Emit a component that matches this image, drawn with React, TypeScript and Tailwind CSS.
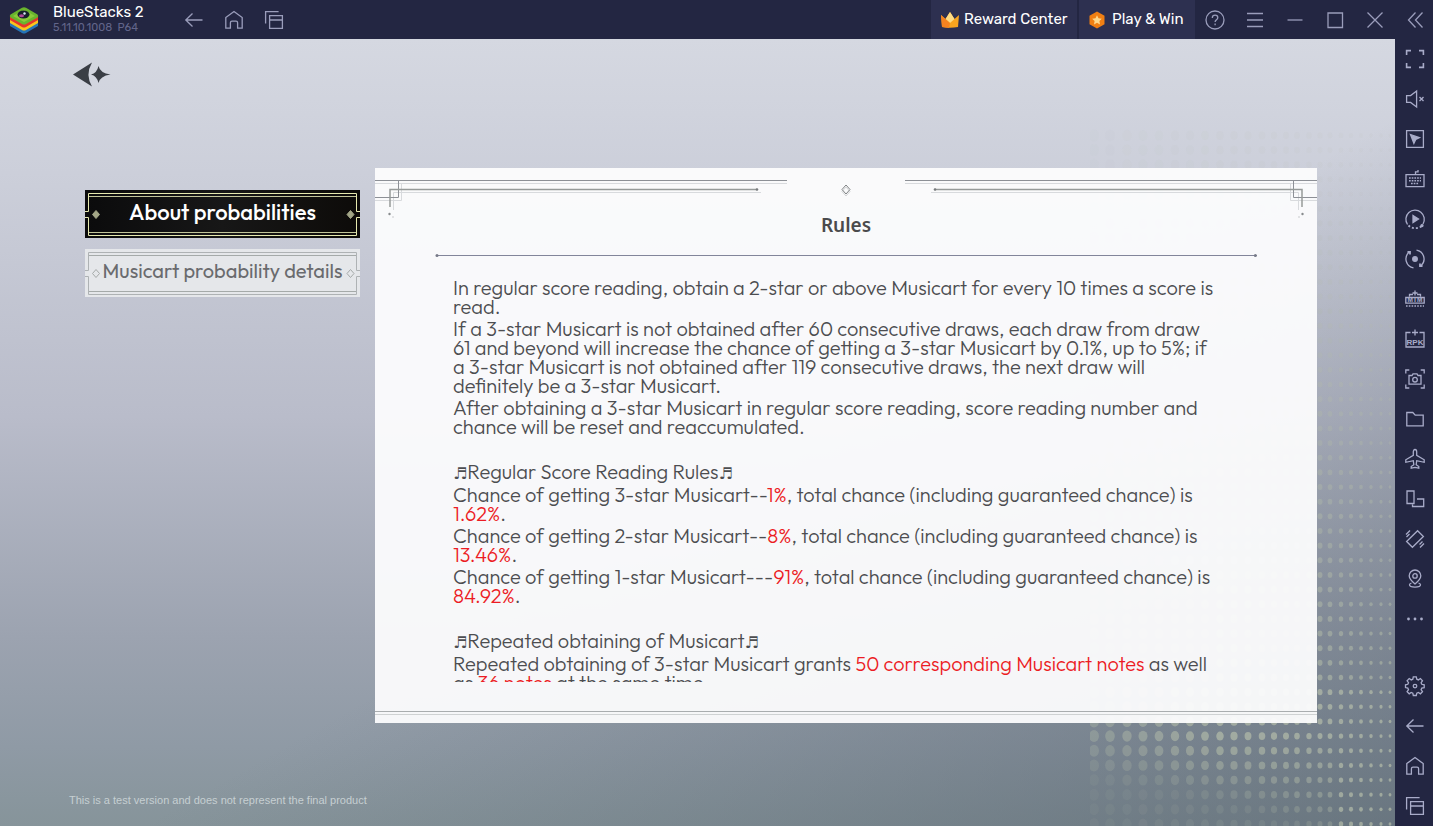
import React from "react";

const bodyFont = "font-['Outfit',Lato,sans-serif]";

const Svg = ({ children, size = 22 }: { children: React.ReactNode; size?: number }) => (
  <svg
    width={size}
    height={size}
    viewBox="0 0 22 22"
    fill="none"
    stroke="currentColor"
    strokeWidth="1.3"
    aria-hidden="true"
  >
    {children}
  </svg>
);

const icons = {
  back: (
    <Svg>
      <path d="M19.5 11H3M9.5 4.5 2.8 11l6.7 6.5" />
    </Svg>
  ),
  home: (
    <Svg>
      <path d="M2.8 8.6 11 2.6l8.2 6v10.6h-4.6v-5.4a1.6 1.6 0 0 0-1.6-1.6H9a1.6 1.6 0 0 0-1.6 1.6v5.4H2.8z" />
    </Svg>
  ),
  recent: (
    <Svg>
      <path d="M2.6 14.5V2.6h13M6.6 6.6h12.8v12.8H6.6zM6.6 11h12.8" />
    </Svg>
  ),
  help: (
    <Svg>
      <circle cx="11" cy="11" r="9" />
      <path d="M8.3 8.9c0-1.7 1.2-2.7 2.8-2.7 1.5 0 2.7 1 2.7 2.5 0 2-2.7 2.2-2.7 4.3M11.1 14.6v1.6" />
    </Svg>
  ),
  menu: (
    <Svg>
      <path d="M3 4.5h16M3 11h16M3 17.5h16" />
    </Svg>
  ),
  minimize: (
    <Svg>
      <path d="M3.5 11h15" />
    </Svg>
  ),
  maximize: (
    <Svg>
      <path d="M4 4h14.5v14.5H4z" />
    </Svg>
  ),
  close: (
    <Svg>
      <path d="m3.5 3.5 15 15M18.5 3.5l-15 15" />
    </Svg>
  ),
  collapse: (
    <Svg>
      <path d="M11.5 3.5 4.5 11l7 7.5M18.5 3.5l-7 7.5 7 7.5" />
    </Svg>
  ),
  fullscreen: (
    <Svg>
      <path d="M2.6 7V2.6H7M15 2.6h4.4V7M19.4 15v4.4H15M7 19.4H2.6V15" strokeWidth="1.6" />
    </Svg>
  ),
  mute: (
    <Svg>
      <path d="M2.6 7.6h4l6-4.6v16l-6-4.6h-4zM15.5 9l4 4M19.5 9l-4 4" />
    </Svg>
  ),
  pointer: (
    <Svg>
      <path d="M2.6 2.6h16.8v16.8H2.6z" />
      <path d="m6.5 6.5 9 3.2-3.8 1.8-1.8 3.8z" fill="currentColor" />
    </Svg>
  ),
  keyboard: (
    <Svg>
      <path d="M2 6.6h18v12H2zM11.5 6.5V3.8H14V2" />
      <path d="M5 10h12M5 12.7h12M7 15.5h8" strokeDasharray="1.7 1" strokeWidth="1.5" />
    </Svg>
  ),
  macro: (
    <Svg>
      <path d="M3.5 16.5a9.2 9.2 0 1 1 15.5-.5" />
      <path d="M4.5 17.5c3.5 3.5 10 3.7 13.5.2" strokeDasharray="2 2" strokeWidth="1.8" />
      <path d="m9 7.5 5.5 3.5L9 14.5z" fill="currentColor" />
      <circle cx="18" cy="17.6" r="1" fill="currentColor" />
    </Svg>
  ),
  sync: (
    <Svg>
      <path d="M9.5 19.9A9 9 0 0 1 5 4.3M12.500 2.100A9 9 0 0 1 17 17.7" />
      <path d="M3.500 4h2.500v2.500M18.500 18H16v-2.500" strokeWidth="1.8" />
      <circle cx="11" cy="11" r="2.3" fill="currentColor" />
    </Svg>
  ),
  memory: (
    <Svg>
      <path d="M5.5 8.5v-2H9M13 6.500h3.5v2M11 2.500v5M8.500 5h5M1.800 9.500h18.400v5.700H1.800z" />
      <text x="11" y="14.3" textAnchor="middle" fontSize="6.5" fontWeight="700" fontFamily="Liberation Sans, sans-serif" fill="currentColor" stroke="none">
        MTM
      </text>
      <path d="M2 18h18" strokeDasharray="1.6 1.2" />
    </Svg>
  ),
  apk: (
    <Svg>
      <path d="M6.5 4.5H2V19h18V4.500h-4.500M11 1.500v6M8 4.500h6" />
      <text x="11" y="16.500" textAnchor="middle" fontSize="8" fontWeight="700" fontFamily="Liberation Sans, sans-serif" fill="currentColor" stroke="none">
        RPK
      </text>
    </Svg>
  ),
  screenshot: (
    <Svg>
      <path d="M1.8 5.5V2h3.5M16.7 2h3.5v3.5M20.2 16.5V20h-3.5M5.3 20H1.8v-3.5" />
      <path d="M5 7.5h3l1-1.7h4l1 1.7h3v8.7H5z" />
      <circle cx="11" cy="11.7" r="2.3" />
    </Svg>
  ),
  folder: (
    <Svg>
      <path d="M2.8 4.5h6l2.4 2.7h8v10.6H2.8z" />
    </Svg>
  ),
  plane: (
    <Svg>
      <path d="M11 1.5c1.2 0 1.7 1.2 1.7 2.6v3.2l7.5 4.5v2.5l-7.5-1.6-.5 4 2.6 1.8v1.600L11 19.300l-3.800.8v-1.600l2.600-1.800-.5-4-7.500 1.600v-2.500l7.500-4.500V4.100c0-1.400.5-2.600 1.700-2.600z" />
    </Svg>
  ),
  resize: (
    <Svg>
      <path d="M3 3h7v12.5H3zM13 11h6.7v7.5H8.5v-2" />
    </Svg>
  ),
  rotate: (
    <Svg>
      <path d="m13.6 2.7 5.8 5.8L8.400 19.300l-5.800-5.800zM2 6.500l4-4M2.500 9l3-3M16 19.500l4-4M15.500 16.500l3-3" />
    </Svg>
  ),
  location: (
    <Svg>
      <path d="M11 16c-3-2.5-5.8-5-5.8-8.2a5.800 5.800 0 0 1 11.600 0C16.800 11 14 13.500 11 16z" />
      <circle cx="11" cy="7.9" r="2.2" />
      <path d="M7.5 15c-1.3.5-2 1-2 1.8 0 1.5 2.5 2.3 5.5 2.3s5.500-.8 5.500-2.300c0-.8-.7-1.300-2-1.800" />
    </Svg>
  ),
  more: (
    <Svg>
      <g fill="currentColor" stroke="none">
        <circle cx="4.5" cy="11" r="1.4" />
        <circle cx="11" cy="11" r="1.4" />
        <circle cx="17.5" cy="11" r="1.4" />
      </g>
    </Svg>
  ),
  settings: (
    <Svg>
      <path d="m9.3 1.8-.5 2.4-1.6.7-2-1.4-2.1 2.2 1.4 2-.7 1.6-2.3.5v2.8l2.3.5.7 1.600-1.400 2 2.100 2.100 2-1.400 1.600.7.5 2.400h3l.5-2.400 1.600-.7 2 1.400 2.100-2.100-1.400-2 .7-1.600 2.400-.5V9.800l-2.400-.5-.7-1.600 1.400-2-2.100-2.200-2 1.400-1.600-.7-.5-2.400z" />
      <circle cx="11" cy="11.1" r="1.8" />
    </Svg>
  ),
};

const sideTools = [
  { label: "Full screen", icon: icons.fullscreen },
  { label: "Mute", icon: icons.mute },
  { label: "Lock cursor", icon: icons.pointer },
  { label: "Game controls", icon: icons.keyboard },
  { label: "Macro recorder", icon: icons.macro },
  { label: "Sync operations", icon: icons.sync },
  { label: "Trim memory", icon: icons.memory },
  { label: "Install APK", icon: icons.apk },
  { label: "Screenshot", icon: icons.screenshot },
  { label: "Media folder", icon: icons.folder },
  { label: "Airplane mode", icon: icons.plane },
  { label: "Resize", icon: icons.resize },
  { label: "Rotate", icon: icons.rotate },
  { label: "Location", icon: icons.location },
  { label: "More", icon: icons.more },
];

const sideNav = [
  { label: "Settings", icon: icons.settings },
  { label: "Back", icon: icons.back },
  { label: "Home", icon: icons.home },
  { label: "Recent apps", icon: icons.recent },
];

const IconButton = ({ label, icon }: { label: string; icon: React.ReactNode }) => (
  <button type="button" aria-label={label} className="flex h-10 w-10 shrink-0 items-center justify-center">
    {icon}
  </button>
);

const Logo = () => (
  <svg width="30" height="28" viewBox="0 0 30 28" aria-hidden="true">
    <path d="M1 16v4l12 7q2 1 4 0l12-7v-4L15 22z" fill="#2574b8" />
    <path d="M1 13v4l12 7q2 1 4 0l12-7v-4L15 20z" fill="#f9c51c" />
    <path d="M1 10v4l12 7q2 1 4 0l12-7v-4L15 17z" fill="#e3342b" />
    <path d="M1.5 8.5 13 1.8q2-1 4 0l11.500 6.700q1.500 1.500 0 3L17 18q-2 1-4 0L1.500 11.500q-1.500-1.500 0-3z" fill="#69b42d" />
    <path d="m4 10 11-6.5L26 10l-11 6z" fill="#8acb3a" />
    <ellipse cx="14.5" cy="8.5" rx="6" ry="4" fill="#16202b" />
    <ellipse cx="12.5" cy="9.8" rx="2.5" ry="1.5" fill="#b2479c" />
    <circle cx="15.5" cy="7.5" r="1.2" fill="#d8ecf6" />
  </svg>
);

const TitleBar = () => (
  <header className="flex h-[39px] shrink-0 items-center overflow-hidden bg-[#232642] font-[Rubik,Inter,sans-serif] text-[#9a9dbb]">
    <div className="flex items-center gap-[14px] pl-[9px]">
      <Logo />
      <div className="w-[121px]">
        <div className="text-[15px] leading-[16px] text-white">BlueStacks 2</div>
        <div className="text-[11px] leading-[15px] text-[#62658a]">5.11.10.1008&nbsp; P64</div>
      </div>
    </div>
    <nav className="flex">
      <IconButton label="Back" icon={icons.back} />
      <IconButton label="Home" icon={icons.home} />
      <IconButton label="Recent apps" icon={icons.recent} />
    </nav>

    <div className="-mr-0.5 ml-auto flex h-full items-center">
      <button type="button" className="flex h-full w-[148px] items-center gap-1 border-r-2 border-[#232642] bg-[#2d3050] pl-[9px] text-[15px] text-white">
        <svg width="20" height="18" viewBox="0 0 20 18" aria-hidden="true">
          <path d="m1 4 4.5 4L10 1l4.500 7L19 4l-1 12q-8 1.500-16 0z" fill="#f9a51f" />
          <path d="m10 1 4.5 7L10 12 5.500 8z" fill="#ffdc83" />
          <path d="m1 4 9 8-1 5-7-1z" fill="#f58220" />
        </svg>
        Reward Center
      </button>
      <button type="button" className="flex h-full w-[116px] items-center gap-[6px] bg-[#2d3050] pl-[9px] text-[15px] whitespace-nowrap text-white">
        <svg className="shrink-0" width="18" height="18" viewBox="0 0 18 18" aria-hidden="true">
          <path d="M9 .5 16.500 4.700v8.600L9 17.500l-7.500-4.200V4.700z" fill="#f07f13" />
          <path d="m9 4.3 1.5 3 3.300.5-2.400 2.300.6 3.300-3-1.600-3 1.600.6-3.300-2.400-2.300 3.300-.5z" fill="#ffd98c" />
        </svg>
        Play &amp; Win
      </button>
      <IconButton label="Help" icon={icons.help} />
      <IconButton label="Menu" icon={icons.menu} />
      <IconButton label="Minimize" icon={icons.minimize} />
      <IconButton label="Maximize" icon={icons.maximize} />
      <IconButton label="Close" icon={icons.close} />
      <IconButton label="Collapse sidebar" icon={icons.collapse} />
    </div>
  </header>
);

const SideBar = () => (
  <aside className="flex w-[38px] shrink-0 flex-col justify-between overflow-hidden bg-[#232642] text-[#a9acc9]">
    <div>
      {sideTools.map((tool) => (
        <IconButton key={tool.label} {...tool} />
      ))}
    </div>
    <div>
      {sideNav.map((tool) => (
        <IconButton key={tool.label} {...tool} />
      ))}
    </div>
  </aside>
);

// Halftone dots in the lower right corner, shrinking to the right
const dotColumns = [1, 17, 34, 50, 66, 82, 97, 112, 127, 141, 155, 169, 181, 193, 204, 216, 227, 237, 248, 258, 268, 278, 288, 297];

const HalftoneDots = () => (
  <svg className="absolute right-0 bottom-0" width="305" height="700" viewBox="0 0 305 700" aria-hidden="true">
    {dotColumns.map((x, col) =>
      Array.from({ length: 48 }, (_, row) => {
        const y = 698 - row * 14.65;
        const fadeTop = y < 560 ? Math.max(0.1, y / 680) : 1;
        const fadeLow = y > 612 && col < 18 ? Math.max(0.2, 1 - ((y - 612) / 85) * (1.5 - col / 18)) : 1;
        const edge = Math.min(1, 0.5 + col / 16);
        return (
          <ellipse
            key={`${col}-${row}`}
            cx={x + 3}
            cy={y}
            rx={5 - col * 0.155}
            ry={6 - col * 0.185}
            fill="#b3bca9"
            opacity={0.7 * fadeTop * fadeLow * edge}
          />
        );
      })
    )}
  </svg>
);

const TabFrame = ({ line, inner, diamond, solid }: { line: string; inner: string; diamond: string; solid: boolean }) => (
  <svg className="absolute inset-0" width="275" height="48" viewBox="0 0 275 48" fill="none" stroke={line} aria-hidden="true">
    <path d="M0 21.5h3.500v-18h268v18h3.500M0 27.500h3.500v18h268v-18h3.500" />
    <path d="M4 6.5h267M4 42.500h267" stroke={inner} />
    <path
      d="m11 20.5 3.500 4-3.500 4-3.500-4zM265.500 20.500l3.500 4-3.500 4-3.500-4z"
      stroke={diamond}
      fill={solid ? diamond : "none"}
    />
  </svg>
);

const Ornament = ({ className = "" }: { className?: string }) => (
  <svg className={className} width="412" height="52" viewBox="0 0 412 52" fill="none" aria-hidden="true">
    <path d="M0 15.5h412M0 32.500h26.500v-17M18.500 42V24.500H386" stroke="#d8dadd" />
    <path d="M0 12.5h412M0 29.500h23.500v-17" stroke="#8d9096" />
    <path d="M15 39V21.500h367" stroke="#969a99" strokeWidth="1.5" />
    <circle cx="382" cy="21.5" r="1.3" fill="#777a7c" />
    <circle cx="14.5" cy="46" r="1.2" fill="#888b8e" />
    <circle cx="18" cy="49" r="1" fill="#d8dadd" />
  </svg>
);

const Note = () => <span className="font-['DejaVu_Sans',sans-serif] text-[16px] leading-none italic">♬</span>;

const Red = ({ children }: { children: React.ReactNode }) => <span className="text-[#ec1c24]">{children}</span>;

const RulesPanel = () => (
  <section className="flex min-w-0 flex-1 flex-col bg-[#fcfcfd]/95">
    <div className="flex h-[52px] shrink-0 justify-between">
      <Ornament />
      <svg className="mt-[15px]" width="12" height="14" viewBox="0 0 12 14" fill="none" aria-hidden="true">
        <path d="m6 4 4 4.5L6 13 2 8.500z" stroke="#d2d4d6" />
        <path d="m6 2 4 4.5L6 11 2 6.500z" stroke="#7f8284" />
      </svg>
      <Ornament className="-scale-x-100" />
    </div>

    <div className="flex min-h-0 flex-1 flex-col px-[60px]">
      <h1 className="-mt-2 text-center font-['Noto_Sans',sans-serif] text-[19px] leading-[26px] font-semibold text-[#4a4a4c]">
        Rules
      </h1>
      <svg className="mt-[15px] h-[5px] w-full shrink-0" aria-hidden="true">
        <line x1="1" y1="2.5" x2="100%" y2="2.5" stroke="#82859a" />
        <circle cx="2" cy="2.5" r="1.5" fill="#777a88" />
        <circle cx="99.8%" cy="2.5" r="1.5" fill="#777a88" />
      </svg>

      <div className={`mt-5 min-h-0 flex-1 space-y-[3px] overflow-hidden pl-[18px] text-[20px] leading-[19px] font-light whitespace-nowrap text-[#4c4d50] ${bodyFont}`}>
        <p>
          In regular score reading, obtain a 2-star or above Musicart for every 10 times a score is
          <br />
          read.
        </p>
        <p>
          If a 3-star Musicart is not obtained after 60 consecutive draws, each draw from draw
          <br />
          61 and beyond will increase the chance of getting a 3-star Musicart by 0.1%, up to 5%; if
          <br />
          a 3-star Musicart is not obtained after 119 consecutive draws, the next draw will
          <br />
          definitely be a 3-star Musicart.
        </p>
        <p>
          After obtaining a 3-star Musicart in regular score reading, score reading number and
          <br />
          chance will be reset and reaccumulated.
        </p>

        <h2 className="pt-[23px]">
          <Note />Regular Score Reading Rules<Note />
        </h2>
        <p>
          Chance of getting 3-star Musicart--<Red>1%</Red>, total chance (including guaranteed chance) is
          <br />
          <Red>1.62%</Red>.
        </p>
        <p>
          Chance of getting 2-star Musicart--<Red>8%</Red>, total chance (including guaranteed chance) is
          <br />
          <Red>13.46%</Red>.
        </p>
        <p>
          Chance of getting 1-star Musicart---<Red>91%</Red>, total chance (including guaranteed chance) is
          <br />
          <Red>84.92%</Red>.
        </p>

        <h2 className="pt-[23px]">
          <Note />Repeated obtaining of Musicart<Note />
        </h2>
        <p>
          Repeated obtaining of 3-star Musicart grants <Red>50 corresponding Musicart notes</Red> as well
          <br />
          as <Red>36 notes</Red> at the same time.
        </p>
      </div>
    </div>

    {/* Bottom border */}
    <div className="mt-[29px] mb-2 h-1 shrink-0 border-t border-b border-t-[#a9adaf] border-b-[#cfd2d3]" />
  </section>
);

const App = () => (
  <div className="flex h-screen flex-col overflow-hidden">
    <TitleBar />
    <div className="flex min-h-0 flex-1">
      <main className="relative flex min-w-0 flex-1 flex-col bg-[linear-gradient(#d5d8e1,#cccfda_17%,#b9bcca_48%,#9ca3b0_76%,#8f9aa5_90%,#86949a)]">
        <div className="absolute inset-0 bg-linear-to-br from-transparent from-55% to-[#56626e]/60" />
        <HalftoneDots />

        <div className="relative flex min-h-0 flex-1 flex-col pr-[78px] pl-[73px]">
          <button type="button" aria-label="Go back" className="mt-[23px] h-[25px] w-[38px] shrink-0">
            <svg width="38" height="25" viewBox="0 0 38 25" fill="#3a3e45" aria-hidden="true">
              <path d="M0 12.5 19 .5q-7 12 0 24z" />
              <path d="M25.5 4q1.500 7 12 8.500-10.500 1.500-12 8.500-1.500-7-7.500-8.500 6-1.500 7.500-8.500z" />
            </svg>
          </button>

          <div className="mt-[81px] flex min-h-0 flex-1 gap-[15px] pl-3">
            <nav className={`flex w-[275px] shrink-0 flex-col gap-[11px] pt-[22px] whitespace-nowrap ${bodyFont}`}>
              <button type="button" className="relative h-12 bg-linear-to-r from-[#0b0b0c] via-[#171717] to-[#0d0b09] pb-1 text-[22px] font-medium text-white">
                <TabFrame line="#e6e9ae" inner="#c3c69a" diamond="#a3a687" solid />
                About probabilities
              </button>
              <button type="button" className="relative h-12 bg-[#e5e7ea] pb-1 text-[20px] text-[#6a6b6e]">
                <TabFrame line="#aeb2b4" inner="#a5aaa9" diamond="#a5aaa9" solid={false} />
                Musicart probability details
              </button>
            </nav>
            <RulesPanel />
          </div>

          <footer className="-ml-1 flex h-[103px] shrink-0 items-end pb-5 font-['Liberation_Sans',sans-serif] text-[11px] leading-3 text-[#c6cfd2]">
            This is a test version and does not represent the final product
          </footer>
        </div>
      </main>
      <SideBar />
    </div>
  </div>
);

export default App;
